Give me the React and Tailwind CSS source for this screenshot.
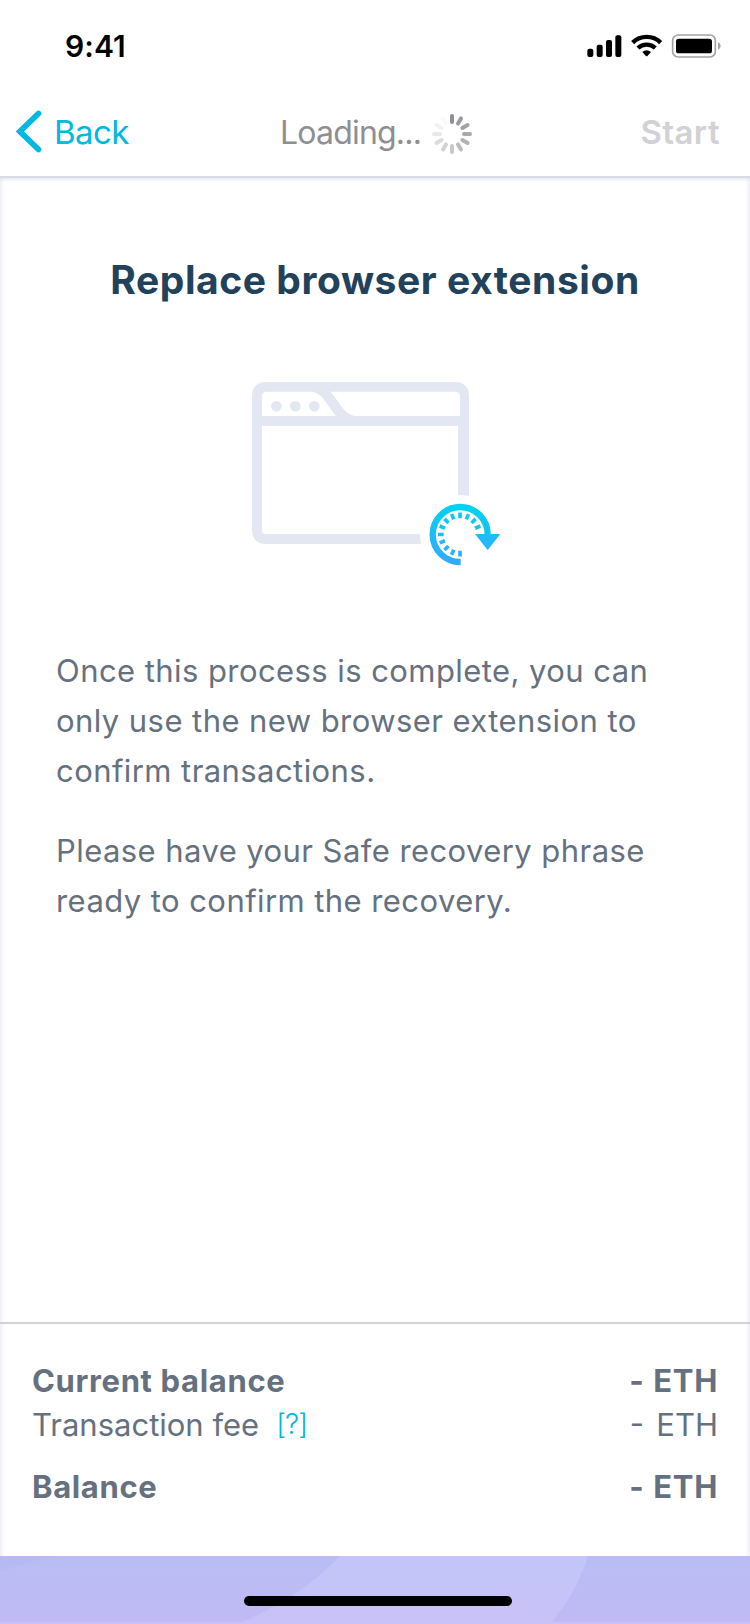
const SPOKES = ['#8e8e93', '#9a9a9f', '#a3a3a7', '#aaaaae', '#b3b3b7', '#bcbcc0', '#c8c8cb', '#d2d2d4', '#dcdcde', '#e8e8ea', '#f2f2f3', '#f9f9fa'];
const TICKS = [180, 202.5, 225, 247.5, 270, 292.5, 315, 337.5, 0, 22.5, 45, 67.5];

function StatusIcons() {
  return (
    <svg width="140" height="30" viewBox="630 93 420 90">
      <rect x="637" y="146" width="18" height="25" rx="6" />
      <rect x="665" y="134" width="18" height="37" rx="6" />
      <rect x="693" y="120" width="18" height="51" rx="6" />
      <rect x="721" y="106" width="18" height="65" rx="6" />
      <path d="M773 128 A60 60 0 0 1 857 128" fill="none" stroke="#000" strokeWidth="13" />
      <path d="M789 144 A38 38 0 0 1 841 144" fill="none" stroke="#000" strokeWidth="13" />
      <path d="M802 156 Q815 145 828 156 L818 167 Q815 170 812 167 Z" />
      <rect x="893" y="105" width="128" height="66" rx="16" fill="none" stroke="#a3a3a3" strokeWidth="5" />
      <rect x="903" y="116" width="108" height="44" rx="8" />
      <path d="M1029 126 Q1037 130 1037 138 Q1037 146 1029 150 Z" fill="#a3a3a3" />
    </svg>
  );
}

function Spinner() {
  return (
    <svg width="40" height="40" viewBox="-20 -20 40 40" className="shrink-0">
      {SPOKES.map((color, i) => (
        <line key={color} x1="0" y1="-18" x2="0" y2="-12" stroke={color} strokeWidth="4" strokeLinecap="round" transform={`rotate(${i * 30})`} />
      ))}
    </svg>
  );
}

function BrowserIllustration() {
  return (
    <svg width="270" height="210" viewBox="0 0 810 630">
      <defs>
        <linearGradient id="arrow" gradientUnits="userSpaceOnUse" x1="0" y1="402" x2="0" y2="586">
          <stop offset="0" stopColor="#01d3ee" />
          <stop offset="1" stopColor="#36a8fc" />
        </linearGradient>
      </defs>
      <path
        fill="#e3e7f1"
        fillRule="evenodd"
        d="M80 36 H643 Q687 36 687 80 V378 Q670 375 654 375 V168 H66 V480 Q66 492 78 492 H540 Q540 508 543 522 H80 Q36 522 36 478 V80 Q36 36 80 36 Z M80 65 Q66 65 66 79 V138 H288 C262 108 247 65 213 65 Z M271 65 C301 96 311 138 354 138 H660 V79 Q660 65 646 65 Z"
      />
      <circle cx="109" cy="109" r="16" fill="#e3e7f1" />
      <circle cx="166" cy="109" r="16" fill="#e3e7f1" />
      <circle cx="223" cy="109" r="16" fill="#e3e7f1" />
      <path d="M662 576 A82.5 82.5 0 1 1 743 494" fill="none" stroke="url(#arrow)" strokeWidth="19" />
      <path d="M705 492 H781 L743 540 Z" fill="url(#arrow)" />
      <g stroke="url(#arrow)" strokeWidth="11">
        {TICKS.map((deg) => {
          const a = (deg * Math.PI) / 180;
          const sx = Math.sin(a);
          const cy = -Math.cos(a);
          return <line key={deg} x1={660 + sx * 49} y1={493.5 + cy * 49} x2={660.1 + sx * 66} y2={493.4 + cy * 66} />;
        })}
      </g>
    </svg>
  );
}

function Row({ label, value, className }) {
  return (
    <div className={`flex justify-between whitespace-pre ${className}`}>
      {label}
      {value}
    </div>
  );
}

export default function App() {
  return (
    <div className="flex h-[1624px] w-[750px] flex-col overflow-hidden bg-white font-['Inter',sans-serif] text-[#66717f]">
      <header className="h-[176px] shrink-0">
        <div className="flex h-[88px] items-start justify-between pt-[31px] pr-[25px] pl-[65px]">
          <span className="text-[30px] leading-[31px] font-semibold tracking-[0.1px] text-black">9:41</span>
          <StatusIcons />
        </div>
        <div className="flex h-[88px] items-start pl-[16px] pr-[30px]">
          <svg width="26" height="44" viewBox="0 0 26 44" className="mt-[21px]">
            <path d="M22.5 4.5 L4 22.5 L22.5 40.5" fill="none" stroke="#00b8e2" strokeWidth="5.8" strokeLinecap="round" strokeLinejoin="miter" />
          </svg>
          <span className="mt-[24px] ml-[12px] w-[226px] text-[33px] leading-[40px] tracking-[-0.6px] text-[#00b8e2]">Back</span>
          <span className="mt-[25px] w-[152px] text-[32px] leading-[40px] tracking-[-0.8px] text-[#8e8e93]">Loading...</span>
          <div className="mt-[25.5px]">
            <Spinner />
          </div>
          <span className="mt-[24px] ml-auto text-[33px] leading-[40px] font-semibold tracking-[0.4px] text-[#d1d1d6]">Start</span>
        </div>
      </header>

      <main className="flex h-[1146px] shrink-0 flex-col items-center border-t-2 border-[#d9dbe5] shadow-[inset_0_5px_4px_-4px_#dfe1ec,inset_4px_0_4px_-3px_#e6e7f1,inset_-4px_0_4px_-3px_#e6e7f1]">
        <h1 className="mt-[77px] text-[39px] leading-[50px] font-bold tracking-[0.56px] whitespace-nowrap text-[#22425b]">Replace browser extension</h1>
        <div className="mt-[65px] h-[210px] w-[270px]">
          <BrowserIllustration />
        </div>
        <div className="mt-[66px] w-full pl-[56px] text-[31px] leading-[50px] tracking-[0.43px] whitespace-nowrap">
          <p>
            Once this process is complete, you can
            <br />
            only use the new browser extension to
            <br />
            confirm transactions.
          </p>
          <p className="mt-[30px]">
            Please have your Safe recovery phrase
            <br />
            ready to confirm the recovery.
          </p>
        </div>
      </main>

      <section className="h-[234px] shrink-0 border-t-2 border-[#d1d1d6] pt-[35px] pr-[32px] pl-[32px] text-[31px] leading-[44px] shadow-[inset_4px_0_4px_-3px_#e6e7f1,inset_-4px_0_4px_-3px_#e6e7f1]">
        <Row label={<span>Current balance</span>} value={<span className="[word-spacing:1px]">- ETH</span>} className="font-bold tracking-[0.65px]" />
        <Row
          label={
            <span>
              Transaction fee<span className="relative -top-[2px] ml-[17px] text-[28px] font-light tracking-[-0.8px] text-[#00b8e2]">[?]</span>
            </span>
          }
          value={<span className="[word-spacing:3.5px]">- ETH</span>}
          className=""
        />
        <Row label={<span>Balance</span>} value={<span className="[word-spacing:1px]">- ETH</span>} className="mt-[17px] font-bold tracking-[0.65px]" />
      </section>

      <footer className="relative h-[68px] shrink-0">
        <svg width="750" height="68" viewBox="0 0 750 68" className="block">
          <defs>
            <linearGradient id="dusk" x1="0" y1="0" x2="0" y2="1">
              <stop offset="0" stopColor="#b9bdf4" />
              <stop offset="1" stopColor="#c0b9f4" />
            </linearGradient>
            <linearGradient id="dawn" gradientUnits="userSpaceOnUse" x1="0" y1="0" x2="0" y2="68">
              <stop offset="0" stopColor="#c2c6f8" />
              <stop offset="1" stopColor="#c9c1f8" />
            </linearGradient>
          </defs>
          <rect width="750" height="68" fill="url(#dusk)" />
          <path d="M0 0 H57 Q25 7 0 15 Z" fill="#b6b9f2" />
          <path d="M340 0 Q301 41 242 66 H552 Q577 35 588 0 Z" fill="url(#dawn)" />
          <rect y="66" width="750" height="2" fill="#cac1f8" />
        </svg>
        <div className="absolute top-[40px] left-[244px] h-[10px] w-[268px] rounded-full bg-black" />
      </footer>
    </div>
  );
}
